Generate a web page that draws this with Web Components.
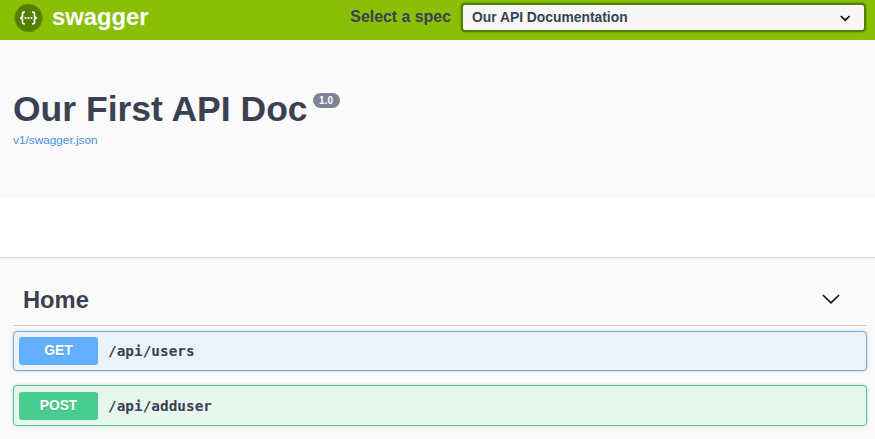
<!DOCTYPE html>
<html lang="en">
<head>
<meta charset="utf-8">
<title>Swagger UI</title>
<style>
html,body{margin:0;height:100%;overflow:hidden;background:#fafafa}
body{font-family:"Liberation Sans",Arial,sans-serif;color:#3b4151}
</style>
</head>
<body>
<swagger-app></swagger-app>
<script>
class Base extends HTMLElement {
  constructor() {
    super();
    this.attachShadow({mode: "open"});
  }
  connectedCallback() {
    this.shadowRoot.innerHTML = "<style>*{box-sizing:border-box}" + this.css() + "</style>" + this.html();
  }
}

customElements.define("swagger-logo", class extends Base {
  css() { return `
    :host{display:flex;align-items:center;gap:9px;color:#fff;font-weight:700;font-size:23.8px;line-height:28px}
    svg{display:block;margin-top:1px}
    span{margin-top:-1px}`; }
  html() { return `
    <svg width="29" height="30" viewBox="0.500 0 29 30">
      <circle cx="15" cy="15" r="13.900" fill="#547f00" stroke="#679c03" stroke-width="1"/>
      <g fill="none" stroke="#fff" stroke-width="1.700">
        <path d="M11.300 9.200h-.8q-1.500 0-1.500 1.600v2q0 2-2.300 2.200q2.300 .2 2.300 2.200v2q0 1.600 1.500 1.600h.8"/>
        <path d="M18.700 9.200h.8q1.500 0 1.500 1.600v2q0 2 2.300 2.200q-2.300 .2-2.300 2.200v2q0 1.600-1.500 1.600h-.8"/>
      </g>
      <g fill="#fff"><circle cx="12" cy="15" r="1.100"/><circle cx="15" cy="15" r="1.100"/><circle cx="18" cy="15" r="1.100"/></g>
    </svg><span><slot></slot></span>`; }
});

customElements.define("spec-select", class extends Base {
  css() { return `
    :host{display:flex;align-items:center;font-weight:700}
    .label{font-size:15.9px;margin-right:10px;line-height:30px;white-space:nowrap}
    .box{width:405px;height:29px;margin-top:1px;border:2px solid #547f00;border-radius:4px;background:#f7f7f7;
      display:flex;align-items:center;justify-content:space-between;padding:0 13px 1px 9px;font-size:13.85px;
      box-shadow:0 0 1px 1px rgba(84,127,0,.35)}
    svg{display:block;margin-top:1px}`; }
  html() { return `
    <span class="label">${this.getAttribute("label")}</span>
    <div class="box"><slot></slot>
      <svg width="12" height="8" viewBox="0 0 12 8"><path d="M1.800 2L6.200 6.200L10.600 2" fill="none" stroke="#111" stroke-width="1.700"/></svg>
    </div>`; }
});

customElements.define("top-bar", class extends Base {
  css() { return `
    :host{display:flex;justify-content:space-between;align-items:flex-start;height:40px;background:#89bf04;padding:2px 9px 0 14px}`; }
  html() { return `<slot></slot>`; }
});

customElements.define("api-info", class extends Base {
  css() { return `
    :host{display:block;height:158px;padding:49px 13px 0}
    h1{margin:0;font-size:35.5px;line-height:40px;font-weight:700;display:flex;align-items:flex-start;white-space:nowrap}
    .version{margin:4px 0 0 5px;height:15px;width:27px;border-radius:8px;background:#7d8492;color:#fff;
      font-size:10px;line-height:15px;text-align:center}
    a{display:block;margin-top:3px;font-size:11.8px;line-height:16px;color:#4990e2;text-decoration:none}`; }
  html() { return `
    <h1><span class="title"><slot></slot></span><span class="version">${this.getAttribute("version")}</span></h1>
    <a>${this.getAttribute("url")}</a>`; }
});

customElements.define("scheme-bar", class extends Base {
  css() { return `:host{display:block;height:59px;background:#fff;margin-bottom:1px;box-shadow:0 1px 0 #dcdddf,0 2px 1px rgba(0,0,0,.04)}`; }
  html() { return ``; }
});

customElements.define("tag-section", class extends Base {
  css() { return `
    :host{display:block;padding:17px 8px 0 13px}
    header{display:flex;justify-content:space-between;align-items:center;height:51px;
      border-bottom:1px solid #c9cacd;padding:0 26px 0 10px;font-size:23.7px;font-weight:700}
    svg{display:block}
    .list{display:flex;flex-direction:column;gap:14px;padding-top:5px}`; }
  html() { return `
    <header><span>${this.getAttribute("name")}</span>
      <svg width="20" height="12" viewBox="0 0 20 12"><path d="M1.900 1L10 8.800L18.100 1" fill="none" stroke="#111" stroke-width="1.600"/></svg>
    </header>
    <div class="list"><slot></slot></div>`; }
});

customElements.define("api-operation", class extends Base {
  css() { return `
    :host{display:flex;align-items:center;box-sizing:border-box;height:40.4px;border:1px solid var(--line);border-radius:4px;
      background:var(--tint);box-shadow:0 0 3px rgba(0,0,0,.19);padding:0 5px}
    :host([method=GET]){--line:#61affe;--tint:#ebf3fb}
    :host([method=POST]){--line:#49cc90;--tint:#e8f6f0}
    .method{width:79px;height:28px;border-radius:3px;background:var(--line);color:#fff;font-weight:700;font-size:13.8px;
      line-height:28px;text-align:center;text-shadow:0 1px 0 rgba(0,0,0,.1)}
    .path{margin-left:10px;font:700 14.4px/20px Consolas,"DejaVu Sans Mono",monospace}`; }
  html() { return `<span class="method">${this.getAttribute("method")}</span><span class="path"><slot></slot></span>`; }
});

customElements.define("swagger-app", class extends Base {
  css() { return `:host{display:flex;flex-direction:column}`; }
  html() { return `
    <top-bar><swagger-logo>swagger</swagger-logo><spec-select label="Select a spec">Our API Documentation</spec-select></top-bar>
    <api-info version="1.0" url="v1/swagger.json">Our First API Doc</api-info>
    <scheme-bar></scheme-bar>
    <tag-section name="Home">
      <api-operation method="GET">/api/users</api-operation>
      <api-operation method="POST">/api/adduser</api-operation>
    </tag-section>`; }
});
</script>
</body>
</html>
